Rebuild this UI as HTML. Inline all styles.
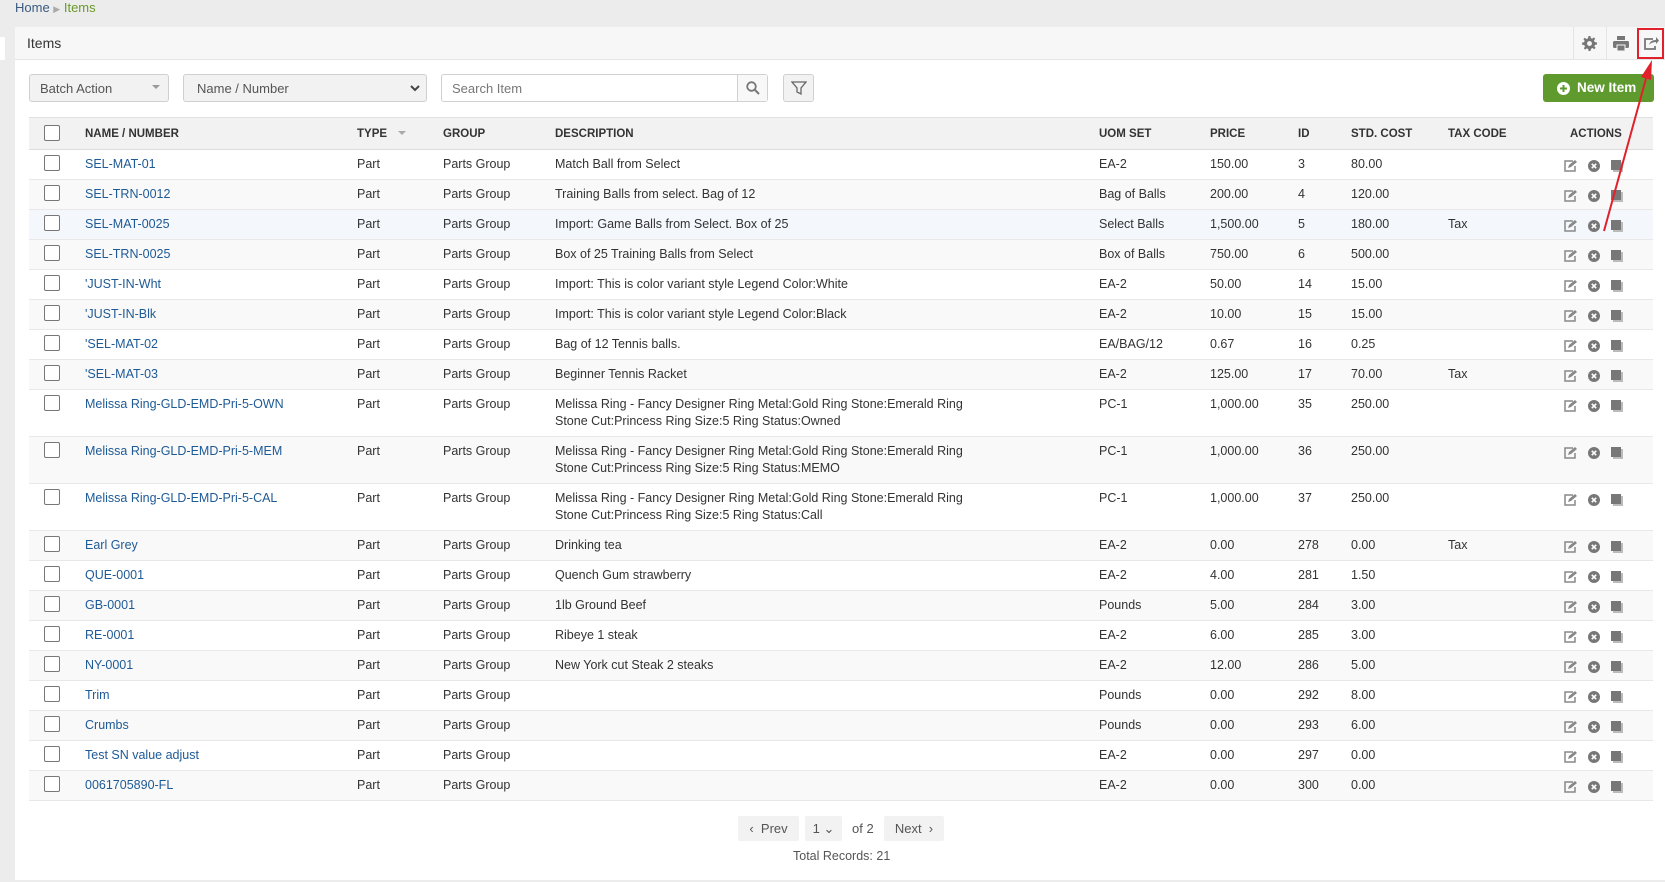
<!DOCTYPE html>
<html><head><meta charset="utf-8"><style>
*{box-sizing:border-box;margin:0;padding:0}
body{width:1665px;height:882px;background:#ececec;font-family:"Liberation Sans",sans-serif;font-size:12.5px;color:#333;position:relative;overflow:hidden}
.abs{position:absolute}
.crumb{left:15px;top:0;font-size:13px;color:#3a5a80}
.crumb span{color:#6a9a2a}
.panel{left:15px;top:27px;width:1650px;height:853px;background:#fff}
.phead{left:15px;top:27px;width:1650px;height:33px;background:#f7f7f7;border-bottom:1px solid #e4e4e4}
.phead .t{position:absolute;left:12px;top:8px;font-size:14px;color:#333}
.sep{top:27px;width:1px;height:33px;background:#e4e4e4}
.ctl{border:1px solid #d0d0d0;background:#f2f2f2;border-radius:3px;color:#555;font-size:13px;padding:6px 10px;height:28px}
table{position:absolute;left:29px;top:117px;width:1624px;border-collapse:collapse}
th{height:32px;background:#f2f2f2;font-size:11.5px;text-align:left;font-weight:bold;color:#333;border-top:1px solid #e0e0e0;border-bottom:1px solid #ddd}
td{vertical-align:top;padding-top:6px;border-bottom:1px solid #e8e8e8;height:30px;line-height:17px}
tr.d td{height:47px}
tbody tr:nth-child(even) td{background:#f9f9f9}
tbody tr.h td{background:#f4f7fc}
.cb{display:inline-block;width:16px;height:16px;border:1px solid #777;border-radius:2px;background:#fff;margin-left:15px}
td.cb0{padding-top:5px}
a{color:#1e5a96;text-decoration:none}
.act{display:flex;gap:11px;margin-left:-6px;padding-top:4px}
.pg{background:#f2f2f2;border-radius:2px;height:25px;top:816px;color:#555;font-size:13px;padding-top:5px;text-align:center}
</style></head><body>
<div class="abs crumb">Home <span style="color:#aaa;font-size:9px">&#9654;</span> <span>Items</span></div>
<div class="abs" style="left:0;top:37px;width:5px;height:23px;background:#fff"></div>
<div class="abs panel"></div>
<div class="abs phead"><div class="t">Items</div></div>
<div class="abs sep" style="left:1573px"></div>
<div class="abs sep" style="left:1606px"></div>
<div class="abs sep" style="left:1637px"></div>
<svg class="abs" style="left:1582px;top:36px" width="15" height="15" viewBox="0 0 16 16"><path fill="#777" d="M7 0h2l.4 2.2 1.5.6 1.8-1.3 1.4 1.4-1.3 1.8.6 1.5L16 7v2l-2.2.4-.6 1.5 1.3 1.8-1.4 1.4-1.8-1.3-1.5.6L9 16H7l-.4-2.2-1.5-.6-1.8 1.3-1.4-1.4 1.3-1.8-.6-1.5L0 9V7l2.2-.4.6-1.5-1.3-1.8 1.4-1.4 1.8 1.3 1.5-.6z"/><circle cx="8" cy="8" r="2.6" fill="#f7f7f7"/></svg>
<svg class="abs" style="left:1613px;top:36px" width="16" height="15" viewBox="0 0 16 15"><rect x="4" y="0" width="8" height="4" fill="#777"/><rect x="0" y="5" width="16" height="7" rx="1.5" fill="#777"/><rect x="4" y="9" width="8" height="6" fill="#777" stroke="#f7f7f7"/></svg>
<svg class="abs" style="left:1643px;top:35px" width="16" height="15" viewBox="0 0 16 15"><path d="M10 4H2v10h10v-3" fill="none" stroke="#777" stroke-width="1.8"/><path d="M6 10c1-4 4-5 7-5V2l3 3.5L13 9V7c-3 0-5 1-7 3z" fill="#777"/></svg>
<div class="abs" style="left:1637px;top:28px;width:27px;height:31px;border:2px solid #e0202a"></div>

<div class="abs ctl" style="left:29px;top:74px;width:140px">Batch Action<span style="position:absolute;right:8px;top:10px;border:4px solid transparent;border-top-color:#999"></span></div>
<div class="abs ctl" style="left:183px;top:74px;width:244px;padding-left:13px">Name / Number<svg style="position:absolute;right:6px;top:10px" width="10" height="7"><path d="M1 1l4 4 4-4" stroke="#444" stroke-width="2" fill="none"/></svg></div>
<div class="abs ctl" style="left:441px;top:74px;width:327px;background:#fff;color:#777">Search Item<div style="position:absolute;right:0;top:0;width:30px;height:26px;border-left:1px solid #d0d0d0;background:#f8f8f8"><svg style="margin:6px 0 0 8px" width="14" height="14"><circle cx="5.5" cy="5.5" r="4.3" stroke="#777" stroke-width="1.8" fill="none"/><path d="M8.5 8.5l4.5 4.5" stroke="#777" stroke-width="2"/></svg></div></div>
<div class="abs ctl" style="left:783px;top:74px;width:31px;padding:5px 7px"><svg width="16" height="16"><path d="M1 2h14l-5 6v6l-4-2V8z" fill="none" stroke="#666" stroke-width="1.3"/></svg></div>
<div class="abs" style="left:1543px;top:74px;width:111px;height:28px;background:#5e9a2e;border-radius:3px;color:#fff;font-weight:bold;font-size:13.5px;padding:6px 0 0 34px">New Item<svg style="position:absolute;left:14px;top:8px" width="13" height="13"><circle cx="6.5" cy="6.5" r="6.5" fill="#fff"/><path d="M6.5 3v7M3 6.5h7" stroke="#5e9a2e" stroke-width="2"/></svg></div>

<table><colgroup><col style="width:56px"><col style="width:272px"><col style="width:86px"><col style="width:112px"><col style="width:544px"><col style="width:111px"><col style="width:88px"><col style="width:53px"><col style="width:97px"><col style="width:122px"><col></colgroup>
<thead><tr><th><span class="cb" style="margin-top:2px"></span></th><th>NAME / NUMBER</th><th>TYPE <span style="display:inline-block;margin-left:8px;border:4px solid transparent;border-top-color:#aaa;vertical-align:-2px"></span></th><th>GROUP</th><th>DESCRIPTION</th><th>UOM SET</th><th>PRICE</th><th>ID</th><th>STD. COST</th><th>TAX CODE</th><th>ACTIONS</th></tr></thead>
<tbody id="tb"></tbody></table>
<script>
var R=[["SEL-MAT-01","Match Ball from Select","EA-2","150.00","3","80.00",""],
["SEL-TRN-0012","Training Balls from select. Bag of 12","Bag of Balls","200.00","4","120.00",""],
["SEL-MAT-0025","Import: Game Balls from Select. Box of 25","Select Balls","1,500.00","5","180.00","Tax"],
["SEL-TRN-0025","Box of 25 Training Balls from Select","Box of Balls","750.00","6","500.00",""],
["'JUST-IN-Wht","Import: This is color variant style Legend Color:White","EA-2","50.00","14","15.00",""],
["'JUST-IN-Blk","Import: This is color variant style Legend Color:Black","EA-2","10.00","15","15.00",""],
["'SEL-MAT-02","Bag of 12 Tennis balls.","EA/BAG/12","0.67","16","0.25",""],
["'SEL-MAT-03","Beginner Tennis Racket","EA-2","125.00","17","70.00","Tax"],
["Melissa Ring-GLD-EMD-Pri-5-OWN","Melissa Ring - Fancy Designer Ring Metal:Gold Ring Stone:Emerald Ring<br>Stone Cut:Princess Ring Size:5 Ring Status:Owned","PC-1","1,000.00","35","250.00",""],
["Melissa Ring-GLD-EMD-Pri-5-MEM","Melissa Ring - Fancy Designer Ring Metal:Gold Ring Stone:Emerald Ring<br>Stone Cut:Princess Ring Size:5 Ring Status:MEMO","PC-1","1,000.00","36","250.00",""],
["Melissa Ring-GLD-EMD-Pri-5-CAL","Melissa Ring - Fancy Designer Ring Metal:Gold Ring Stone:Emerald Ring<br>Stone Cut:Princess Ring Size:5 Ring Status:Call","PC-1","1,000.00","37","250.00",""],
["Earl Grey","Drinking tea","EA-2","0.00","278","0.00","Tax"],
["QUE-0001","Quench Gum strawberry","EA-2","4.00","281","1.50",""],
["GB-0001","1lb Ground Beef","Pounds","5.00","284","3.00",""],
["RE-0001","Ribeye 1 steak","EA-2","6.00","285","3.00",""],
["NY-0001","New York cut Steak 2 steaks","EA-2","12.00","286","5.00",""],
["Trim","","Pounds","0.00","292","8.00",""],
["Crumbs","","Pounds","0.00","293","6.00",""],
["Test SN value adjust","","EA-2","0.00","297","0.00",""],
["0061705890-FL","","EA-2","0.00","300","0.00",""]];
var act='<div class="act"><svg width="13" height="12"><path d="M9 1H1v10h10V6" fill="none" stroke="#888" stroke-width="1.5"/><path d="M4 8l1-3 6-5 2 2-6 5z" fill="#888"/></svg><svg width="12" height="12"><circle cx="6" cy="6" r="6" fill="#777"/><path d="M3.8 3.8l4.4 4.4M8.2 3.8l-4.4 4.4" stroke="#fff" stroke-width="1.6"/></svg><svg width="12" height="12"><rect x="2" y="2" width="10" height="10" fill="#bbb"/><rect x="0" y="0" width="10" height="10" fill="#777"/></svg></div>';
var h='';R.forEach(function(r,i){var cls=(r[1].indexOf('<br>')>0?'d':'')+(i==2?' h':'');
h+='<tr class="'+cls+'"><td class="cb0"><span class="cb"></span></td><td><a>'+r[0]+'</a></td><td>Part</td><td>Parts Group</td><td>'+r[1]+'</td><td>'+r[2]+'</td><td>'+r[3]+'</td><td>'+r[4]+'</td><td>'+r[5]+'</td><td>'+r[6]+'</td><td>'+act+'</td></tr>';});
document.getElementById('tb').innerHTML=h;
</script>
<div class="abs pg" style="left:738px;width:61px">&lsaquo;&nbsp; Prev</div>
<div class="abs pg" style="left:805px;width:37px">1 &#8964;</div>
<div class="abs" style="left:852px;top:821px;color:#555;font-size:13px">of 2</div>
<div class="abs pg" style="left:884px;width:60px">Next &nbsp;&rsaquo;</div>
<div class="abs" style="left:793px;top:849px;color:#555;font-size:12.5px">Total Records: 21</div>
<svg class="abs" style="left:0;top:0" width="1665" height="882"><path d="M1604 231L1647 75" stroke="#e0202a" stroke-width="2"/><path d="M1652 60l-11 17 10 3z" fill="#e0202a"/></svg>
</body></html>
